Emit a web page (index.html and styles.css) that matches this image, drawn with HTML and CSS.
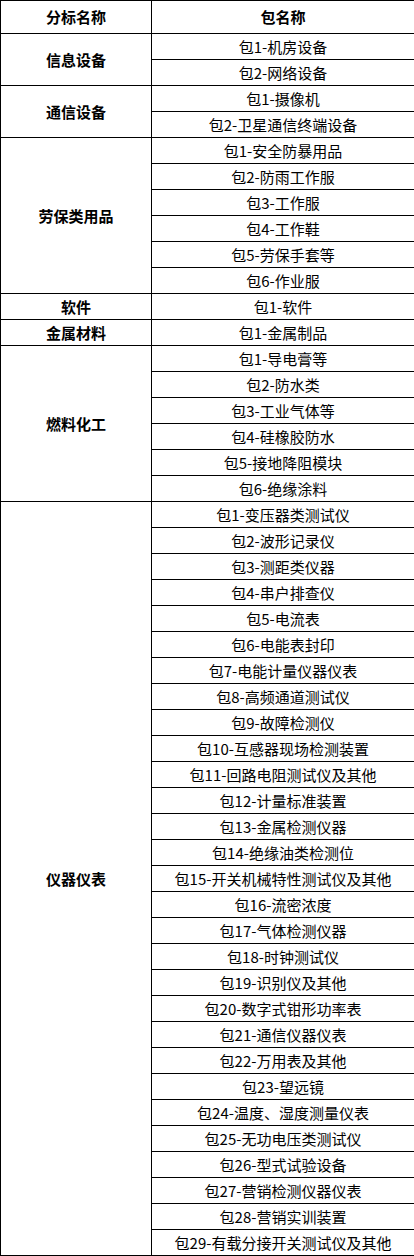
FILE: index.html
```html
<!DOCTYPE html>
<html lang="zh">
<head>
<meta charset="utf-8">
<link rel="stylesheet" href="styles.css">
</head>
<body>
<table class="pkg-table">
<colgroup><col class="col-cat"><col class="col-pkg"></colgroup>
<thead>
<tr><th>分标名称</th><th>包名称</th></tr>
</thead>
<tbody>
<tr><td class="cat" rowspan="2">信息设备</td><td>包1-机房设备</td></tr>
<tr><td>包2-网络设备</td></tr>
<tr><td class="cat" rowspan="2">通信设备</td><td>包1-摄像机</td></tr>
<tr><td>包2-卫星通信终端设备</td></tr>
<tr><td class="cat" rowspan="6">劳保类用品</td><td>包1-安全防暴用品</td></tr>
<tr><td>包2-防雨工作服</td></tr>
<tr><td>包3-工作服</td></tr>
<tr><td>包4-工作鞋</td></tr>
<tr><td>包5-劳保手套等</td></tr>
<tr><td>包6-作业服</td></tr>
<tr><td class="cat">软件</td><td>包1-软件</td></tr>
<tr><td class="cat">金属材料</td><td>包1-金属制品</td></tr>
<tr><td class="cat" rowspan="6">燃料化工</td><td>包1-导电膏等</td></tr>
<tr><td>包2-防水类</td></tr>
<tr><td>包3-工业气体等</td></tr>
<tr><td>包4-硅橡胶防水</td></tr>
<tr><td>包5-接地降阻模块</td></tr>
<tr><td>包6-绝缘涂料</td></tr>
<tr><td class="cat" rowspan="29">仪器仪表</td><td>包1-变压器类测试仪</td></tr>
<tr><td>包2-波形记录仪</td></tr>
<tr><td>包3-测距类仪器</td></tr>
<tr><td>包4-串户排查仪</td></tr>
<tr><td>包5-电流表</td></tr>
<tr><td>包6-电能表封印</td></tr>
<tr><td>包7-电能计量仪器仪表</td></tr>
<tr><td>包8-高频通道测试仪</td></tr>
<tr><td>包9-故障检测仪</td></tr>
<tr><td>包10-互感器现场检测装置</td></tr>
<tr><td>包11-回路电阻测试仪及其他</td></tr>
<tr><td>包12-计量标准装置</td></tr>
<tr><td>包13-金属检测仪器</td></tr>
<tr><td>包14-绝缘油类检测位</td></tr>
<tr><td>包15-开关机械特性测试仪及其他</td></tr>
<tr><td>包16-流密浓度</td></tr>
<tr><td>包17-气体检测仪器</td></tr>
<tr><td>包18-时钟测试仪</td></tr>
<tr><td>包19-识别仪及其他</td></tr>
<tr><td>包20-数字式钳形功率表</td></tr>
<tr><td>包21-通信仪器仪表</td></tr>
<tr><td>包22-万用表及其他</td></tr>
<tr><td>包23-望远镜</td></tr>
<tr><td>包24-温度、湿度测量仪表</td></tr>
<tr><td>包25-无功电压类测试仪</td></tr>
<tr><td>包26-型式试验设备</td></tr>
<tr><td>包27-营销检测仪器仪表</td></tr>
<tr><td>包28-营销实训装置</td></tr>
<tr><td>包29-有载分接开关测试仪及其他</td></tr>
</tbody>
</table>
</body>
</html>
```
FILE: styles.css
```css
html, body {
  margin: 0;
  padding: 0;
  background: #fff;
}
.pkg-table {
  width: 414px;
  border-collapse: collapse;
  table-layout: fixed;
  font-family: "Noto Sans CJK SC", "Noto Sans", sans-serif;
  font-size: 15px;
  color: #000;
}
.col-cat { width: 151px; }
.col-pkg { width: 263px; }
.pkg-table th,
.pkg-table td {
  border: 1px solid #000;
  padding: 0;
  text-align: center;
  vertical-align: middle;
  line-height: 20px;
  white-space: nowrap;
}
.pkg-table th {
  height: 32px;
  font-weight: bold;
}
.pkg-table td {
  height: 25px;
}
.pkg-table td.cat {
  font-weight: bold;
}
```
